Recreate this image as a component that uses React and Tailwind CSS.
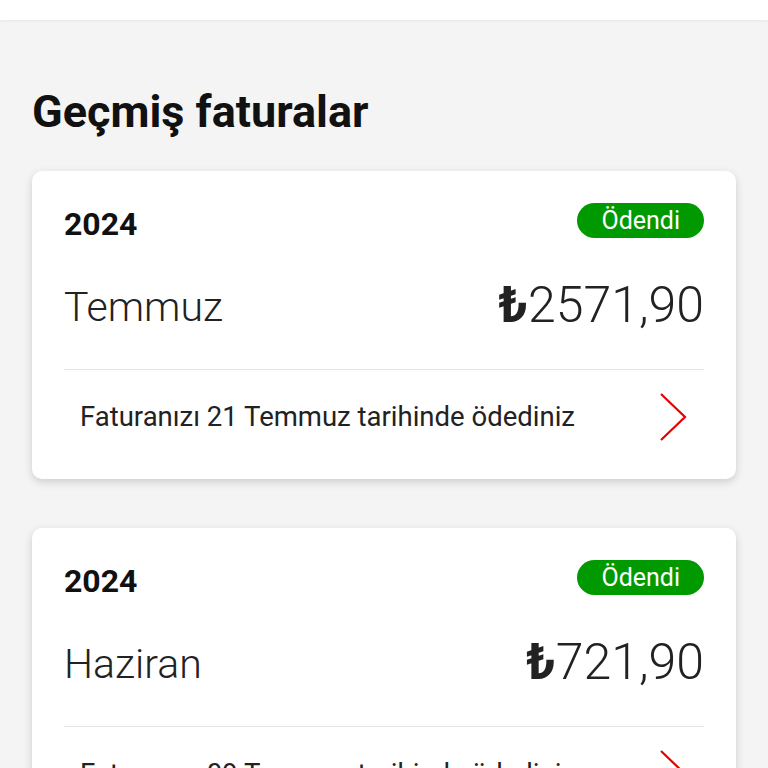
import React from 'react';

const bills = [
  { year: '2024', month: 'Temmuz', amount: '2571,90', note: 'Faturanızı 21 Temmuz tarihinde ödediniz' },
  { year: '2024', month: 'Haziran', amount: '721,90', note: 'Faturanızı 09 Temmuz tarihinde ödediniz' },
];

// Kırmızı ok
const Chevron = () => (
  <svg width="30" height="50" viewBox="0 0 30 50" fill="none">
    <path d="M3 2 L27 25 L3 48" stroke="#e60000" strokeWidth="2.2" />
  </svg>
);

const BillCard = ({ bill }) => (
  <div className="bg-white rounded-[10px] shadow-[0_3px_8px_rgba(0,0,0,0.16)] px-8 pb-4">
    <div className="flex justify-between items-center pt-8 h-[67px]">
      <span className="text-[32px] font-bold leading-none mt-[6px] text-[#111]">{bill.year}</span>
      <span className="bg-[#009a00] text-white text-[25px] leading-[35px] h-[35px] px-6 rounded-full">Ödendi</span>
    </div>
    <div className="flex justify-between items-center mt-[37px] h-[60px]">
      <span className="text-[41px] font-light text-[#222] leading-none mt-[4px]">{bill.month}</span>
      <span className="text-[50px] font-light text-[#222] leading-none">
        <span className="font-bold">₺</span>{bill.amount}
      </span>
    </div>
    <div className="border-t border-[#e4e4e4] mt-[34px] flex items-center justify-between pl-4 pr-4 h-[94px]">
      <span className="text-[27.5px] text-[#222]">{bill.note}</span>
      <Chevron />
    </div>
  </div>
);

export default function App() {
  return (
    <div className="min-h-screen bg-[#f4f4f4] overflow-hidden h-screen" style={{ fontFamily: 'Roboto, sans-serif' }}>
      <div className="h-5 bg-white shadow-[0_1px_3px_rgba(0,0,0,0.06)]" />
      <div className="px-8">
        <h1 className="text-[45px] font-bold text-[#111] mt-[67px] leading-[50px]">Geçmiş faturalar</h1>
        <div className="flex flex-col gap-[49px] mt-[34px]">
          {bills.map((b, i) => <BillCard key={i} bill={b} />)}
        </div>
      </div>
    </div>
  );
}
